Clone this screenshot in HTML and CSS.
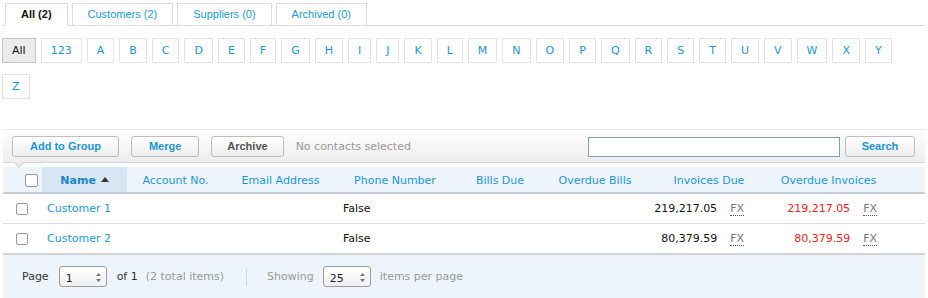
FILE: index.html
```html
<!DOCTYPE html>
<html lang="en">
<head>
    <meta charset="UTF-8">
    <title>Contacts</title>
    <link rel="stylesheet" href="styles.css">
</head>
<body>

    <div class="page">
        <ul class="tabs">
            <li class="tab active">All (2)</li>
            <li class="tab">Customers (2)</li>
            <li class="tab">Suppliers (0)</li>
            <li class="tab">Archived (0)</li>
        </ul>

        <div class="letters">
            <a class="letter current">All</a>
            <a class="letter">123</a>
            <a class="letter">A</a>
            <a class="letter">B</a>
            <a class="letter">C</a>
            <a class="letter">D</a>
            <a class="letter">E</a>
            <a class="letter">F</a>
            <a class="letter">G</a>
            <a class="letter">H</a>
            <a class="letter">I</a>
            <a class="letter">J</a>
            <a class="letter">K</a>
            <a class="letter">L</a>
            <a class="letter">M</a>
            <a class="letter">N</a>
            <a class="letter">O</a>
            <a class="letter">P</a>
            <a class="letter">Q</a>
            <a class="letter">R</a>
            <a class="letter">S</a>
            <a class="letter">T</a>
            <a class="letter">U</a>
            <a class="letter">V</a>
            <a class="letter">W</a>
            <a class="letter">X</a>
            <a class="letter">Y</a>
            <a class="letter">Z</a>
        </div>

        <div class="toolbar">
            <button class="btn">Add to Group</button>
            <button class="btn">Merge</button>
            <button class="btn btn-grey">Archive</button>
            <span class="selected-info">No contacts selected</span>
            <div class="search">
                <input type="text" class="search-box">
                <button class="btn btn-search">Search</button>
            </div>
        </div>

        <table class="contacts">
            <colgroup>
                <col style="width:39px">
                <col style="width:85px">
                <col style="width:97px">
                <col style="width:113px">
                <col style="width:116px">
                <col style="width:94px">
                <col style="width:96px">
                <col style="width:132px">
                <col style="width:107px">
                <col>
            </colgroup>
            <thead>
                <tr>
                    <th class="check-col head-check"><span class="check big"></span></th>
                    <th class="sorted">Name <span class="sort-up"></span></th>
                    <th>Account No.</th>
                    <th>Email Address</th>
                    <th>Phone Number</th>
                    <th>Bills Due</th>
                    <th>Overdue Bills</th>
                    <th>Invoices Due</th>
                    <th>Overdue Invoices</th>
                    <th></th>
                </tr>
            </thead>
            <tbody>
                <tr>
                    <td class="check-col"><span class="check"></span></td>
                    <td class="name"><a>Customer 1</a></td>
                    <td></td>
                    <td></td>
                    <td class="phone">False</td>
                    <td></td>
                    <td></td>
                    <td class="amount due">219,217.05<span class="fx">FX</span></td>
                    <td class="amount overdue"><span class="red">219,217.05</span><span class="fx">FX</span></td>
                    <td></td>
                </tr>
                <tr>
                    <td class="check-col"><span class="check"></span></td>
                    <td class="name"><a>Customer 2</a></td>
                    <td></td>
                    <td></td>
                    <td class="phone">False</td>
                    <td></td>
                    <td></td>
                    <td class="amount due">80,379.59<span class="fx">FX</span></td>
                    <td class="amount overdue"><span class="red">80,379.59</span><span class="fx">FX</span></td>
                    <td></td>
                </tr>
            </tbody>
        </table>

        <div class="pager">
            <span class="dark">Page</span>
            <span class="spinner page-box">
                <span>1</span>
                <svg width="7" height="12" viewBox="0 0 7 12"><path d="M1 5 L3.5 2 L6 5 Z M1 8 L3.5 11 L6 8 Z" fill="#777"/></svg>
            </span>
            <span class="dark">of 1</span>
            <span class="muted total">(2 total items)</span>
            <span class="divider"></span>
            <span class="muted">Showing</span>
            <span class="spinner size-box">
                <span>25</span>
                <svg width="7" height="12" viewBox="0 0 7 12"><path d="M1 5 L3.5 2 L6 5 Z M1 8 L3.5 11 L6 8 Z" fill="#777"/></svg>
            </span>
            <span class="muted">items per page</span>
        </div>
    </div>

</body>
</html>
```

FILE: styles.css
```css
body {
    margin: 0;
    font-family: "DejaVu Sans", Verdana, sans-serif;
    font-size: 11px;
    color: #222;
    background: #fff;
}

.page {
    padding: 3px 3px 0;
}

/* tabs */
.tabs {
    list-style: none;
    margin: 0;
    padding: 0 0 0 2px;
    display: flex;
    gap: 4px;
    border-bottom: 1px solid #dcdcdc;
}

.tab {
    height: 21px;
    line-height: 21px;
    padding: 0 15px;
    margin-bottom: -1px;
    border: 1px solid #dcdcdc;
    background: #fff;
    font-family: "Liberation Sans", Arial, sans-serif;
    font-size: 11px;
    color: #1a9ad6;
}

.tab.active {
    border-bottom-color: #fff;
    font-weight: bold;
    color: #111;
}

/* letter filter */
.letters {
    display: flex;
    flex-wrap: wrap;
    gap: 11px 5px;
    margin: 12px 0 0 -1px;
    padding-right: 24px;
}

.letter {
    line-height: 23px;
    padding: 0 9px;
    border: 1px solid #e3e3e3;
    color: #1a96d4;
    cursor: pointer;
}

.letter.current {
    background: #ebebeb;
    border-color: #c6c6c6;
    color: #111;
}

/* toolbar */
.toolbar {
    position: relative;
    display: flex;
    align-items: center;
    height: 32px;
    margin-top: 30px;
    padding: 0 10px 0 9px;
    border-top: 1px solid #ececec;
    border-bottom: 1px solid #d6d6d6;
    background: linear-gradient(#fff, #ededed);
}

.toolbar::before,
.toolbar::after {
    content: "";
    position: absolute;
    left: 11px;
    width: 0;
    height: 0;
    border-left: 5px solid transparent;
    border-right: 5px solid transparent;
}

.toolbar::before {
    bottom: -6px;
    border-top: 5px solid #d6d6d6;
}

.toolbar::after {
    bottom: -4px;
    left: 12px;
    border-left-width: 4px;
    border-right-width: 4px;
    border-top: 4px solid #ededed;
}

.btn {
    height: 21px;
    padding: 0 17px;
    margin-right: 12px;
    border: 1px solid #bdbdbd;
    border-radius: 3px;
    background: linear-gradient(#fff, #eeeeee);
    font-family: "Liberation Sans", Arial, sans-serif;
    font-size: 11px;
    font-weight: bold;
    color: #1a96d4;
    cursor: pointer;
}

.btn-grey {
    padding: 0 15px;
    color: #555;
}

.selected-info {
    color: #999;
}

.search {
    margin-left: auto;
    display: flex;
    align-items: center;
}

.search-box {
    box-sizing: border-box;
    width: 252px;
    height: 20px;
    margin: 1px 5px 0 0;
    border: 1px solid #7f9db9;
    padding: 0 3px;
    outline: none;
}

.btn-search {
    width: 70px;
    margin-right: 0;
    padding: 0;
}

/* table */
.contacts {
    width: 100%;
    margin-top: 4px;
    border-collapse: collapse;
    table-layout: fixed;
}

.contacts th {
    height: 24px;
    padding: 1px 0 0;
    background: #eef4fc;
    border-bottom: 2px solid #c3ccd8;
    font-weight: normal;
    color: #1a96d4;
    text-align: center;
    white-space: nowrap;
}

.contacts th.sorted {
    background: #d6e6f5;
    font-weight: bold;
    color: #1a86c0;
}

.sort-up {
    display: inline-block;
    width: 0;
    height: 0;
    margin-left: 1px;
    vertical-align: 2px;
    border-left: 4px solid transparent;
    border-right: 4px solid transparent;
    border-bottom: 5px solid #333;
}

.contacts td {
    height: 29px;
    padding: 0;
    border-bottom: 1px solid #dcdcdc;
    white-space: nowrap;
}

.contacts tbody tr:last-child td {
    border-bottom: none;
}

.check-col {
    text-align: left;
    padding-left: 13px !important;
}

.head-check {
    padding-left: 18px !important;
}

.check {
    display: inline-block;
    box-sizing: border-box;
    width: 12px;
    height: 12px;
    border: 1px solid #999;
    border-radius: 2px;
    background: #fff;
    vertical-align: middle;
}

.check.big {
    width: 13px;
    height: 13px;
}

.name {
    padding-left: 5px !important;
}

.name a {
    color: #1a9ad6;
}

.phone {
    padding-left: 6px !important;
    color: #111;
}

.amount {
    text-align: right;
    color: #111;
}

.amount.due {
    padding-right: 31px !important;
}

.amount.overdue {
    padding-right: 5px !important;
}

.red {
    color: #ee1c1c;
}

.fx {
    margin-left: 13px;
    color: #777;
    border-bottom: 1px dotted #555;
}

/* pager */
.pager {
    display: flex;
    align-items: center;
    height: 43px;
    padding-left: 19px;
    border-top: 2px solid #d2d2d2;
    background: #eef4fc;
}

.dark {
    color: #333;
}

.muted {
    color: #999;
}

.spinner {
    box-sizing: border-box;
    display: flex;
    align-items: center;
    justify-content: space-between;
    width: 48px;
    height: 21px;
    padding: 3px 4px 0 6px;
    border: 1px solid #9c9c9c;
    border-radius: 3px;
    background: linear-gradient(#fff, #f0f0f0);
    color: #222;
}

.spinner svg {
    margin-top: -3px;
}

.page-box {
    margin: 0 10px;
}

.size-box {
    margin: 0 9px;
}

.total {
    margin-left: 8px;
}

.divider {
    width: 1px;
    height: 18px;
    margin: 0 20px 0 22px;
    background: #d8d8d8;
}
```
